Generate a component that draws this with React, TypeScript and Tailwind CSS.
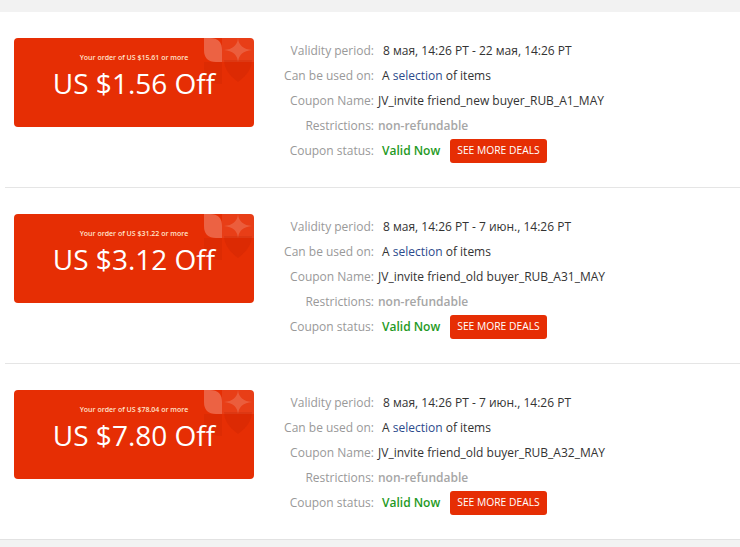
import React from 'react';

type Coupon = {
  min: string;
  amount: string;
  period: string;
  name: string;
};

const coupons: Coupon[] = [
  {
    min: 'US $15.61',
    amount: 'US $1.56 Off',
    period: '8 мая, 14:26 PT - 22 мая, 14:26 PT',
    name: 'JV_invite friend_new buyer_RUB_A1_MAY',
  },
  {
    min: 'US $31.22',
    amount: 'US $3.12 Off',
    period: '8 мая, 14:26 PT - 7 июн., 14:26 PT',
    name: 'JV_invite friend_old buyer_RUB_A31_MAY',
  },
  {
    min: 'US $78.04',
    amount: 'US $7.80 Off',
    period: '8 мая, 14:26 PT - 7 июн., 14:26 PT',
    name: 'JV_invite friend_old buyer_RUB_A32_MAY',
  },
];

const Decor = () => (
  <svg className="absolute right-0 top-0" width="50" height="50" viewBox="0 0 50 50">
    {/* light block behind star */}
    <rect x="18" y="0" width="32" height="24" fill="#ffffff" fillOpacity="0.08" />
    {/* leaf */}
    <path d="M0 0 H6 Q18 0 18 12 V24 H12 Q0 24 0 12 Z" fill="#ffffff" fillOpacity="0.25" />
    {/* dark lower pieces */}
    <path d="M0 24 H18 V46 Q0 46 0 30 Z" fill="#a81a00" fillOpacity="0.14" />
    <path d="M20 22 H48 Q48 34 34 44 Q20 34 20 22 Z" fill="#a81a00" fillOpacity="0.16" />
    {/* star */}
    <path d="M34 0 Q35 11 48 12 Q35 13 34 24 Q33 13 20 12 Q33 11 34 0 Z" fill="#ffffff" fillOpacity="0.16" />
  </svg>
);

const Row = ({ label, children }: { label: string; children: React.ReactNode }) => (
  <div className="flex h-[25px] items-center">
    <div className="w-[99px] shrink-0 text-right text-[#999]">{label}</div>
    <div className="ml-[9px] flex items-center">{children}</div>
  </div>
);

const CouponRow = ({ c, last }: { c: Coupon; last?: boolean }) => (
  <div className={`flex h-[176px] items-start pt-[26px] ${last ? '' : 'ml-[5px] border-b border-[#e5e5e5]'}`}>
    <div className={`relative flex h-[89px] w-[240px] shrink-0 flex-col items-center overflow-hidden rounded-[4px] bg-[#e62e04] ${last ? 'ml-[14px]' : 'ml-[9px]'}`}>
      <Decor />
      <div className="relative mt-[15px] text-[7px] font-semibold leading-[10px] text-[#ffe4cc]">
        Your order of {c.min} or more
      </div>
      <div className="relative mt-[2px] text-[28px] leading-[36px] text-white">{c.amount}</div>
    </div>
    <div className="ml-[21px] text-[12px] text-[#333]">
      <Row label="Validity period:">
        <span>{c.period}</span>
      </Row>
      <Row label="Can be used on:">
        <span className="-ml-[1px]">
          A <span className="text-[#2b4a8c]">selection</span> of items
        </span>
      </Row>
      <Row label="Coupon Name:">
        <span className="-ml-[5px]">{c.name}</span>
      </Row>
      <Row label="Restrictions:">
        <span className="-ml-[5px] font-semibold text-[#a6a6a6]">non-refundable</span>
      </Row>
      <Row label="Coupon status:">
        <span className="-ml-[1px] font-semibold text-[#1f9a24]">Valid Now</span>
        <button className="ml-[10px] mt-[1px] h-[24px] rounded-[3px] bg-[#e62e04] px-[7px] text-[10.3px] text-white">
          SEE MORE DEALS
        </button>
      </Row>
    </div>
  </div>
);

export default function App() {
  return (
    <div className="min-h-[547px] bg-[#f2f2f2] pt-[12px] font-['Open_Sans',sans-serif]">
      <div className="h-[528px] border-b border-[#e2e2e2] bg-white">
        {coupons.map((c, i) => (
          <CouponRow key={i} c={c} last={i === coupons.length - 1} />
        ))}
      </div>
    </div>
  );
}
